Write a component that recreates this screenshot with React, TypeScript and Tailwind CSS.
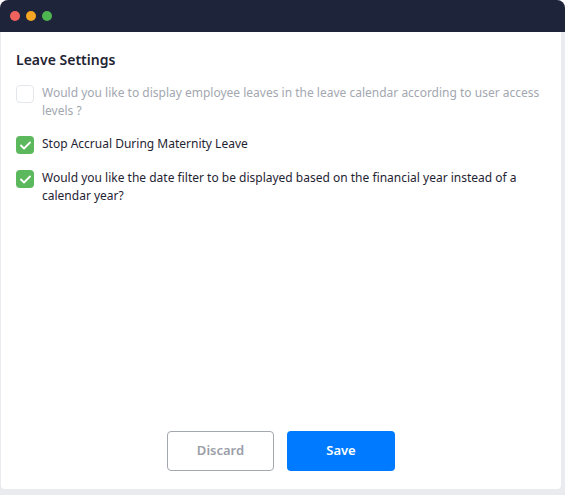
import React from "react";

const Check = ({ checked, disabled }: { checked: boolean; disabled?: boolean }) => (
  <span
    className={
      "mt-px flex h-[18px] w-[18px] shrink-0 items-center justify-center rounded-[4px] " +
      (checked ? "bg-[#5cb85c]" : "border border-[#e3e6ea] bg-white")
    }
  >
    {checked && !disabled && (
      <svg width="11" height="9" viewBox="0 0 11 9" fill="none">
        <path d="M1 4.5l3 3L10 1.5" stroke="white" strokeWidth="1.8" strokeLinecap="round" strokeLinejoin="round" />
      </svg>
    )}
  </span>
);

const items = [
  { label: "Would you like to display employee leaves in the leave calendar according to user access levels ?", checked: false, disabled: true },
  { label: "Stop Accrual During Maternity Leave", checked: true },
  { label: "Would you like the date filter to be displayed based on the financial year instead of a calendar year?", checked: true },
];

export default function App() {
  return (
    <div className="h-[495px] w-[565px] bg-white font-['Inter',sans-serif]">
      <div className="flex h-full w-full flex-col overflow-hidden rounded-t-[8px] bg-[#e9ebef] pb-[6px] pl-[1px] pr-[4px]">
        <div className="-ml-[1px] -mr-[4px] flex h-[32px] shrink-0 items-center gap-[6px] bg-[#1e253a] pl-[10px]">
          <span className="h-[10px] w-[10px] rounded-full bg-[#f0625d]" />
          <span className="h-[10px] w-[10px] rounded-full bg-[#f5a623]" />
          <span className="h-[10px] w-[10px] rounded-full bg-[#4fb550]" />
        </div>
        <div className="flex flex-1 flex-col rounded-b-[4px] bg-white px-[15px] pt-[19px]">
          <h1 className="text-[14px] font-semibold leading-[18px] text-[#1f2433]">Leave Settings</h1>
          <div className="mt-[15px] flex flex-col gap-[15px]">
            {items.map((it, i) => (
              <div key={i} className="flex items-start gap-[8px]">
                <Check checked={it.checked} disabled={it.disabled} />
                <p className={"text-[12px] leading-[18px] " + (it.disabled ? "text-[#a3a7b0]" : "text-[#1f2433]")}>{it.label}</p>
              </div>
            ))}
          </div>
          <div className="mt-auto mb-[18px] flex justify-center gap-[13px]">
            <button className="h-[40px] w-[107px] rounded-[4px] border border-[#a3a7b0] text-[13px] font-semibold text-[#9a9ea8]">Discard</button>
            <button className="h-[40px] w-[108px] rounded-[4px] bg-[#007bff] text-[13px] font-semibold text-white">Save</button>
          </div>
        </div>
      </div>
    </div>
  );
}
